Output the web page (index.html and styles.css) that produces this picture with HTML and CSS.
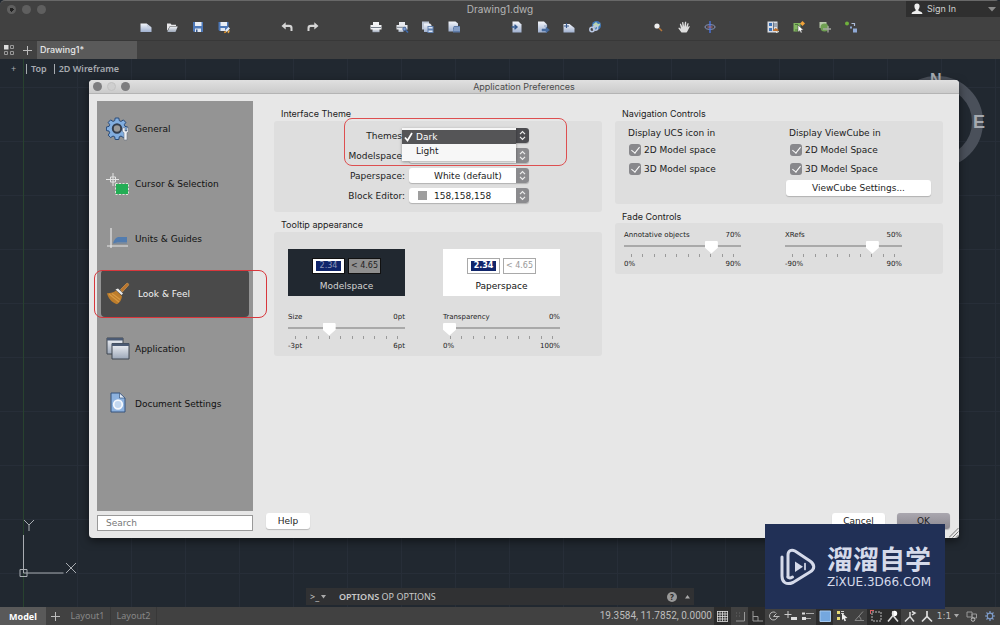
FILE: index.html
```
<!DOCTYPE html>
<html lang="en">
<head>
<meta charset="utf-8">
<title>Drawing1.dwg</title>
<link rel="stylesheet" href="styles.css">
</head>
<body>
<svg class="defs" aria-hidden="true">
  <defs>
    <linearGradient id="paper" x1="0" y1="0" x2="0" y2="1"><stop offset="0" stop-color="#f4f6fb"/><stop offset="1" stop-color="#9fb0cf"/></linearGradient>
    <linearGradient id="steel" x1="0" y1="0" x2="0" y2="1"><stop offset="0" stop-color="#f2f4f8"/><stop offset="1" stop-color="#9ca7b8"/></linearGradient>
    <symbol id="chev" viewBox="0 0 13 15"><path d="M4 6.2 6.5 3.6 9 6.2M4 8.8l2.5 2.6L9 8.8" fill="none" stroke="#eee" stroke-width="1.2"/></symbol>
  </defs>
</svg>
<div class="app">
  <header class="chrome">
    <div class="titlebar">
      <div class="lights"><i class="light dirty"></i><i class="light"></i><i class="light"></i></div>
      <h1 class="doc-title">Drawing1.dwg</h1>
      <button class="signin"><svg width="12" height="12" viewBox="0 0 12 12"><path d="M6 .5c1.800 0 2.700 1.200 2.600 2.800C8.500 5 7.800 6.200 7.400 6.500v1.300c1.500.5 3.800 1 4.100 3.200H.5C.8 8.800 3.100 8.300 4.600 7.800V6.500C4.200 6.200 3.500 5 3.400 3.300 3.300 1.700 4.200.5 6 .5z" fill="#eee"/></svg><span>Sign In</span><svg class="caret" width="8" height="5" viewBox="0 0 8 5"><path d="M0 0h8L4 4.500z" fill="#8a8a8a"/></svg></button>
    </div>
    <nav class="toolbar" aria-label="Tools">
      <div class="group">
        <button aria-label="New"><svg viewBox="0 0 14 14"><path d="M1.500 3.500h6l5 4v4.500h-11z" fill="url(#paper)"/><path d="M7.500 3.500l5 4H8.500z" fill="#c7cfdf"/></svg></button>
        <button aria-label="Open"><svg viewBox="0 0 14 14"><path d="M2 11V3.500h3.500l1 1.200H11V6H5z" fill="#e8e8ea"/><path d="M2.300 12 5 6.500h7.700L10.500 12z" fill="url(#steel)"/></svg></button>
        <button aria-label="Save"><svg viewBox="0 0 14 14"><path d="M2 2h10v10H3l-1-1z" fill="#4d78b8"/><path d="M4 2h6.500v4H4z" fill="#e9eef6"/><path d="M4 8.500h6V12H4z" fill="#dfe6f1"/><path d="M5 9.500h1.500V12H5z" fill="#38598c"/></svg></button>
        <button aria-label="Save as"><svg viewBox="0 0 14 14"><path d="M1.500 2h10v9h-9l-1-1z" fill="#4d78b8"/><path d="M3.500 2H10v4H3.500z" fill="#e9eef6"/><path d="M3.500 8H8v3H3.500z" fill="#dfe6f1"/><path d="M8 10.500 11.500 7l1.500 1.500-3.500 3.500z" fill="#e6eefb"/><path d="M8 10.500l1.500 2-2.500.8z" fill="#f09d2c"/><path d="M10.500 11l2-1v2l-1.500 1.500z" fill="#f2b04b"/></svg></button>
      </div>
      <div class="group">
        <button aria-label="Undo"><svg viewBox="0 0 14 14"><path d="M1.500 6 5.700 2.300v2.500H9c2.500 0 3.500 1.200 3.500 3V11h-2V8.500c0-1-.5-1.500-1.500-1.500H5.700v2.600z" fill="#d6d6d6"/></svg></button>
        <button aria-label="Redo"><svg viewBox="0 0 14 14"><path d="M12.500 6 8.300 2.300v2.500H5c-2.500 0-3.500 1.200-3.500 3V11h2V8.500C3.500 7.500 4 7 5 7h3.300v2.600z" fill="#d6d6d6"/></svg></button>
      </div>
      <div class="group">
        <button aria-label="Print"><svg viewBox="0 0 14 14"><path d="M4 2h6v3H4zM1.500 5h11v4.500h-11z" fill="#f1f2f4"/><path d="M2 7h10v1H2z" fill="#77808c"/><path d="M3.500 9h7v3.200h-7z" fill="url(#steel)"/></svg></button>
        <button aria-label="Print preview"><svg viewBox="0 0 14 14"><path d="M4 2h6v3H4zM1.500 5h11v4.500h-11z" fill="#e7e9ee"/><path d="M2 6.800h9v1H2z" fill="#77808c"/><path d="M3.500 9h5v3h-5z" fill="url(#steel)"/><circle cx="9.500" cy="9" r="1.700" fill="#7d9cd0" stroke="#3c5d96" stroke-width=".8"/><path d="m11 10.500 2 2" stroke="#3c6bb0" stroke-width="1.600"/></svg></button>
        <button aria-label="Batch print"><svg viewBox="0 0 14 14"><path d="M1 1.500h7v8H1z" fill="#bdc6d6"/><path d="M3 3.500h6l1.500 1.500v7H3z" fill="url(#paper)"/><path d="M6.500 6h6v7h-6z" fill="#5f7fae"/><path d="M7.500 7h4v1.500h-4zM7.500 10.500h4V12h-4z" fill="#dbe5f5"/></svg></button>
        <button aria-label="Page setup"><svg viewBox="0 0 14 14"><path d="M1.500 1.500h7l2.500 2v8h-9.500z" fill="url(#paper)"/><path d="M7 6h6v6.500H6V8z" fill="#5e7ba8"/><path d="M7 8h6M6.500 10H13" stroke="#a9bfe0"/></svg></button>
      </div>
      <div class="group">
        <button aria-label="Import"><svg viewBox="0 0 14 14"><path d="M2.500 1.500h6l3 3v8h-9z" fill="url(#paper)"/><path d="M1.500 7h5M4.500 4.800 7 7 4.500 9.200" fill="none" stroke="#33598f" stroke-width="1.400"/></svg></button>
        <button aria-label="Export"><svg viewBox="0 0 14 14"><path d="M2 1.500h6l3 3v8H2z" fill="url(#paper)"/><path d="M6 9h4V7l3.500 3-3.500 2.700V11H6zM8 6h4" fill="#466b9f" stroke="#466b9f" stroke-width=".5"/></svg></button>
        <button aria-label="Publish"><svg viewBox="0 0 14 14"><path d="M1.500 4h6l5 4v4.500h-11z" fill="url(#paper)"/><path d="M2 6h5M4.500 3v5" stroke="#38598c" stroke-width="1.200"/></svg></button>
        <button aria-label="Web link"><svg viewBox="0 0 14 14"><circle cx="8.500" cy="5.500" r="4.500" fill="#3f78bd"/><path d="M5 4.500 8 2l2 2 2.500-.5-1.500 3-3 .5-1 2z" fill="#b8d4b0"/><g fill="none" stroke="#b9c7e2" stroke-width="1.500"><circle cx="4" cy="9.500" r="2.200"/><circle cx="7.500" cy="8" r="2.200"/></g></svg></button>
      </div>
      <div class="group">
        <button aria-label="Zoom"><svg viewBox="0 0 14 14"><circle cx="6" cy="6" r="2.600" fill="#eee"/><path d="m8 8 3 3" stroke="#b5763a" stroke-width="1.500"/></svg></button>
        <button aria-label="Pan"><svg viewBox="0 0 14 14"><path d="M4.500 12.500 1.300 8.300 2 7.500l2 1.300L2.800 4l1-.4L5.500 7 5 2.300 6.200 2l1 4.700L8 1.700l1.200.1-.1 5.100 1.600-3.800 1 .4-1 4 1.300-1.500.9.500-2.600 5-.8 1z" fill="#dfdfdf"/></svg></button>
        <button aria-label="Orbit"><svg viewBox="0 0 14 14"><ellipse cx="7" cy="7" rx="5" ry="2.300" fill="none" stroke="#8795bd"/><path d="M7 1v12" stroke="#4a77ec" stroke-width="1.300"/><path d="M4.500 7h5" stroke="#b76b7f"/></svg></button>
      </div>
      <div class="group">
        <button aria-label="Tool sets"><svg viewBox="0 0 14 14"><path d="M1.500 1.500h10v11h-10z" fill="#d9dde5"/><path d="M3 3h3v3H3zM3 8h3v3H3z" fill="#3d73b8"/><path d="M7.500 2.500v8M8 4h3M8 6h3" stroke="#657287"/><path d="m6.500 11 3-3 3.500 2-1.500 1z" fill="#c0702b"/><path d="m10 12.500 3-1" stroke="#eed"/></svg></button>
        <button aria-label="Quick select"><svg viewBox="0 0 14 14"><path d="M1.500 3h7v8.500h-7z" fill="#83b661"/><path d="M3 4.500h3M3 10h3" stroke="#4c793a"/><path d="m10.500 1 2.500 2.500-2.500 2.500L8 3.500z" fill="#f1a23a"/><path d="M6 5l5.500 5-2.300.2 1 2.300-1.400.5-1-2.300L6 12z" fill="#fff" stroke="#333" stroke-width=".5"/></svg></button>
        <button aria-label="Block"><svg viewBox="0 0 14 14"><path d="M1.500 2h7v6h-7z" fill="#b9c9ab"/><circle cx="6.500" cy="7.500" r="4" fill="#6fa052"/><path d="M5 9h8M10 6v6.500" stroke="#a5a8a1" stroke-width="1.300"/></svg></button>
        <button aria-label="References"><svg viewBox="0 0 14 14"><circle cx="3" cy="3.500" r="2" fill="#6fb13c"/><path d="M7.500 3.500h3V6" fill="none" stroke="#aebdda" stroke-width="1.200"/><path d="M6 6.500h2v2H6zM9 8.500h4v4H9z" fill="#8fa9d6"/></svg></button>
      </div>
    </nav>
    <div class="tabs">
      <button class="grid-btn" aria-label="All drawings"><svg width="10" height="10" viewBox="0 0 10 10"><path d="M0 0h4.500v4.500H0z" fill="#ddd"/><path d="M6.500.5h3v3h-3zM.5 6.500h3v3h-3zM6.500 6.500h3v3h-3z" fill="none" stroke="#999"/></svg></button>
      <button class="add" aria-label="New tab"><svg width="9" height="9" viewBox="0 0 9 9"><path d="M4.500 0v9M0 4.500h9" stroke="#bbb"/></svg></button>
      <button class="tab">Drawing1*</button>
    </div>
  </header>

  <main class="canvas">
    <div class="view-label"><span class="plus">+</span><span class="vl">Top</span><span class="vl">2D Wireframe</span></div>
    <div class="compass"><span class="north">N</span><span class="east">E</span></div>
    <svg class="ucs" width="62" height="60" viewBox="0 0 62 60" fill="none" stroke="#a9adb2"><path d="M4.500 17v38h40M1 51.500h7v7H1zM5 2l5 5 5-5M10 7v6"/><path d="m47 45 10 10M57 45 47 55"/></svg>

    <section class="dialog" role="dialog" aria-labelledby="dlg-title">
      <div class="dlg-bar"><div class="lights"><i class="light"></i><i class="light off"></i><i class="light"></i></div><h2 id="dlg-title">Application Preferences</h2><span></span></div>
      <div class="dlg-body">
        <aside class="side">
          <nav class="side-list" aria-label="Preference pages">
            <button class="side-item"><svg viewBox="0 0 24 24"><path d="M9.200 1h3.600l.5 2.700 1.700.7 2.400-1.500 2.400 2.500-1.500 2.300.7 1.700 2.700.6v3.500l-2.700.6-.7 1.700 1.500 2.300-2.400 2.500-2.400-1.600-1.700.8-.5 2.700H9.200l-.5-2.700-1.700-.8-2.400 1.600-2.400-2.500 1.500-2.300-.7-1.700L.4 13.500V10l2.600-.6.7-1.700-1.500-2.300 2.400-2.500L7 4.400l1.700-.7z" fill="#82aee0" stroke="#294a78" stroke-width="1"/><circle cx="11" cy="11.500" r="4.200" fill="#9a9a9a" stroke="#333d4e" stroke-width="2"/><path d="M16.500 11v3.500l1.500 1.200V23h3v-7.300l1.500-1.200V11l-1.500-.5V14h-2v-3.500z" fill="#eef1f6" stroke="#66707f" stroke-width=".6"/></svg><span>General</span></button>
            <button class="side-item"><svg viewBox="0 0 24 24"><path d="M7 1v13M0 7.500h13M4.500 5h5v5h-5z" fill="none" stroke="#e4e4e4"/><path d="M10 12h12v10H10z" fill="#23ad55"/><path d="M9.500 11.500h13v11h-13z" fill="none" stroke="#d8ead8" stroke-dasharray="2 1.500"/></svg><span>Cursor &amp; Selection</span></button>
            <button class="side-item"><svg viewBox="0 0 24 24"><path d="M5 1v20M1 19h21" stroke="#e6e6e6" stroke-width="1.200"/><path d="M7 16.500c2-6.500 5-6.500 7-6.500h7v5.500h-9c-3 0-3 1-5 1z" fill="#527caf"/><path d="M7 16.500h14" stroke="#789" stroke-width=".8"/></svg><span>Units &amp; Guides</span></button>
            <button class="side-item active"><svg viewBox="0 0 24 24"><path d="m14.500 7.500 6-6c1.500-.7 2.700.5 1.800 2l-6 6.500z" fill="#b9752e" stroke="#dca052" stroke-width=".6"/><path d="m12 6.500 5 5-1.500 1.500-6-5.500z" fill="#ececec"/><path d="M10 8.500c-2 2-5 2.500-9 2.700 1 5 5 9.500 10 11 3-1.700 4.500-4.500 5-8z" fill="#bd7d2c"/><path d="m3 12 10 8M6 11.500l8 6" stroke="#d99a42" stroke-width="1.200"/></svg><span>Look &amp; Feel</span></button>
            <button class="side-item"><svg viewBox="0 0 24 24"><path d="M1 1h16v16H1z" fill="url(#steel)" stroke="#3f4650"/><path d="M1 1h16v2.500H1z" fill="#4b5a73"/><path d="M6 6.500h17V22H6z" fill="url(#steel)" stroke="#3f4650"/><path d="M6 6.500h17V9H6z" fill="#4b5a73"/></svg><span>Application</span></button>
            <button class="side-item"><svg viewBox="0 0 24 24"><path d="M5 1h8.500L19 6v14H5z" fill="#8db2df" stroke="#35537c"/><path d="M13.500 1v5H19z" fill="#e6eef9" stroke="#35537c" stroke-width=".7"/><circle cx="12" cy="12.500" r="4.300" fill="#c2d7f0" stroke="#f5f8fd" stroke-width="1.700"/></svg><span>Document Settings</span></button>
          </nav>
          <input class="search" type="search" placeholder="Search" aria-label="Search">
        </aside>
        <div class="content">
          <div class="panels">
            <div class="col">
              <h3>Interface Theme</h3>
              <div class="panel theme-panel">
                <div class="row">
                  <label for="themes">Themes:</label>
                  <div class="pick open"><select id="themes"><option>Dark</option><option>Light</option></select><svg><use href="#chev"/></svg>
                    <ul class="menu"><li class="on"><svg width="9" height="10" viewBox="0 0 9 10"><path d="M1 5.500 3.500 8.500 8 1" fill="none" stroke="#fff" stroke-width="1.700"/></svg>Dark</li><li>Light</li></ul>
                  </div>
                </div>
                <div class="row"><label for="model">Modelspace:</label><div class="pick"><select id="model"><option>Black (default)</option></select><svg><use href="#chev"/></svg></div></div>
                <div class="row"><label for="papersp">Paperspace:</label><div class="pick"><select id="papersp"><option>White (default)</option></select><svg><use href="#chev"/></svg></div></div>
                <div class="row"><label for="block">Block Editor:</label><div class="pick"><select id="block"><option>158,158,158</option></select><i class="swatch"></i><svg><use href="#chev"/></svg></div></div>
                <div class="mark mark-theme"></div>
              </div>
              <h3 class="later">Tooltip appearance</h3>
              <div class="panel tip-panel">
                <div class="preview dark"><div class="boxes"><span class="val"><b>2.34</b></span><span class="ang">&lt; 4.65</span></div><p>Modelspace</p></div>
                <div class="preview light-bg"><div class="boxes"><span class="val"><b>2.34</b></span><span class="ang">&lt; 4.65</span></div><p>Paperspace</p></div>
                <div class="slider"><div class="ends"><label for="size">Size</label><output>0pt</output></div><input id="size" type="range" min="-3" max="6" value="0"><div class="ticks"><i></i><i></i><i></i><i></i><i></i><i></i><i></i><i></i><i></i><i></i></div><div class="ends"><span>-3pt</span><span>6pt</span></div></div>
                <div class="slider"><div class="ends"><label for="transp">Transparency</label><output>0%</output></div><input id="transp" type="range" min="0" max="100" value="0"><div class="ticks"><i></i><i></i><i></i><i></i><i></i><i></i><i></i><i></i><i></i><i></i></div><div class="ends"><span>0%</span><span>100%</span></div></div>
              </div>
            </div>
            <div class="col">
              <h3>Navigation Controls</h3>
              <div class="panel nav-panel">
                <div class="checks"><h4>Display UCS icon in</h4><label><input type="checkbox" checked>2D Model space</label><label><input type="checkbox" checked>3D Model space</label></div>
                <div class="checks"><h4>Display ViewCube in</h4><label><input type="checkbox" checked>2D Model Space</label><label><input type="checkbox" checked>3D Model Space</label><button class="btn">ViewCube Settings...</button></div>
              </div>
              <h3 class="later">Fade Controls</h3>
              <div class="panel fade-panel">
                <div class="slider"><div class="ends"><label for="anno">Annotative objects</label><output>70%</output></div><input id="anno" type="range" min="0" max="90" value="70"><div class="ticks"><i></i><i></i><i></i><i></i><i></i><i></i><i></i><i></i><i></i><i></i></div><div class="ends"><span>0%</span><span>90%</span></div></div>
                <div class="slider"><div class="ends"><label for="xref">XRefs</label><output>50%</output></div><input id="xref" type="range" min="-90" max="90" value="50"><div class="ticks"><i></i><i></i><i></i><i></i><i></i><i></i><i></i><i></i><i></i><i></i></div><div class="ends"><span>-90%</span><span>90%</span></div></div>
              </div>
            </div>
          </div>
          <footer class="dlg-foot"><button class="btn help">Help</button><button class="btn cancel">Cancel</button><button class="btn ok">OK</button></footer>
        </div>
      </div>
      <svg class="grip" width="10" height="10" viewBox="0 0 10 10"><path d="M0 9.500 9.500 0M3.500 9.500l6-6M7 9.500 9.500 7" stroke="#777" fill="none"/></svg>
    </section>

    <div class="cmd"><span class="prompt">&gt;_<svg width="5" height="4" viewBox="0 0 5 4"><path d="M0 0h5L2.500 3.500z" fill="#aaa"/></svg></span><span class="cmd-text"><b>OPTIONS</b> OP OPTIONS</span><button class="q">?</button><svg width="5" height="4" viewBox="0 0 5 4"><path d="M0 3.500h5L2.500 0z" fill="#aaa"/></svg></div>
  </main>

  <footer class="status">
    <button class="model">Model</button>
    <button class="add" aria-label="Add layout"><svg width="9" height="9" viewBox="0 0 9 9"><path d="M4.500 0v9M0 4.500h9" stroke="#bbb"/></svg></button>
    <button class="layout">Layout1</button>
    <button class="layout">Layout2</button>
    <span class="coords">19.3584, 11.7852, 0.0000</span>
    <div class="toggles">
      <button class="down" aria-label="Grid"><svg viewBox="0 0 14 14"><path d="M1.500 2v10.500M4 2v10.500M6.500 2v10.500M9 2v10.500M11.500 2v10.500M1 2.500h11M1 5h11M1 7.500h11M1 10h11M1 12.500h11" stroke="#ddd" stroke-width=".8"/></svg></button>
      <button aria-label="Snap"><svg viewBox="0 0 14 14"><path d="M11.500 3v9H3" fill="none" stroke="#999"/><path d="M3 4h6M3 7h6" stroke="#666" stroke-dasharray="1 2"/></svg></button>
      <button class="down" aria-label="Ortho"><svg viewBox="0 0 14 14"><path d="M3 2v10h10M3 7.500h5V12" fill="none" stroke="#999"/></svg></button>
      <button aria-label="Polar"><svg viewBox="0 0 14 14"><path d="M10.500 7.500A4 4 0 1 1 8.500 3.500M6.500 7.500h6M6.500 7.500l3-3" fill="none" stroke="#bbb"/></svg></button>
      <button aria-label="Object snap"><svg viewBox="0 0 14 14"><path d="M4 2v7M.5 5.500h7" stroke="#ccc"/><path d="M7 8h6v3H7z" fill="#ddd"/></svg></button>
      <button aria-label="Lineweight"><svg viewBox="0 0 14 14"><path d="M5 4.500h8M5 9.500h5" stroke="#aaa"/><path d="M1 3.500h3v2H1zM1 8h4v3H1z" fill="#ddd"/></svg></button>
      <button class="down" aria-label="Transparency"><svg viewBox="0 0 14 14"><path d="M2 2h10.500v10.500H2z" fill="#74a7df" stroke="#a6caf0"/></svg></button>
      <button aria-label="Quick properties"><svg viewBox="0 0 14 14"><path d="M2 2h3v3H2zM2 8h3v3H2z" fill="#e9dd77"/><path d="M6 2.500h3M6 4.500h3" stroke="#ccc"/><path d="M7 4l5.500 5-2.500.2 1 2.500-1.500.6-1-2.500L7 11z" fill="#eee"/></svg></button>
      <button aria-label="Angle"><svg viewBox="0 0 14 14"><path d="M11 2.500 3 11.500h9M7 7.500c1.500.8 2 2 2 4" fill="none" stroke="#888"/></svg></button>
      <button class="down" aria-label="Dynamic UCS"><svg viewBox="0 0 14 14"><path d="M3 3h9v9H3z" fill="none" stroke="#bbb" stroke-dasharray="2 1"/><path d="M1 1.500h4M1.500 1v4" stroke="#d75c61"/></svg></button>
      <button class="down" aria-label="Annotation visibility"><svg viewBox="0 0 14 14"><circle cx="8.500" cy="4.500" r="2.700" fill="#fff"/><path d="m2 12.500 5-6 5 6M7 7V2" fill="none" stroke="#ddd" stroke-width="1.600"/></svg></button>
      <button aria-label="Annotation auto scale"><svg viewBox="0 0 14 14"><path d="m2 12.500 5-5 4 5M7 8V3M9 6l3-2-3-1.500" fill="none" stroke="#ddd" stroke-width="1.500"/></svg></button>
      <button aria-label="Annotation scale"><svg viewBox="0 0 14 14"><path d="m2 12.500 5-5 5 5M7 8V2" fill="none" stroke="#ddd" stroke-width="1.700"/></svg></button>
      <button class="scale">1:1<svg width="5" height="4" viewBox="0 0 5 4"><path d="M0 0h5L2.500 3.500z" fill="#aaa"/></svg></button>
      <button aria-label="Isolate"><svg viewBox="0 0 14 14"><path d="M2 3h5v5H2zM7 5h4.500v4H7z" fill="none" stroke="#999"/><circle cx="8" cy="10.500" r="1.800" fill="none" stroke="#bbb"/></svg></button>
      <button aria-label="Settings"><svg viewBox="0 0 14 14"><circle cx="7" cy="7" r="2.800" fill="none" stroke="#7f9dcb" stroke-width="1.200"/><path d="M7 2v2M7 10v2M2 7h2M10 7h2M3.500 3.500l1.300 1.300M9.200 9.200l1.300 1.300M3.500 10.500l1.300-1.300M9.200 4.800l1.300-1.300" stroke="#7f9dcb" stroke-width="1.200"/></svg></button>
    </div>
  </footer>

  <div class="brand">
    <svg width="36" height="38" viewBox="0 0 36 38" fill="none" stroke="#d5daea" stroke-linecap="round" stroke-linejoin="round"><path d="M8 29V7c0-4 3-6 7-4l15 10c5 3.500 5 8 0 11L13 34.500C6 37.500 2 34 2 28V9" stroke-width="3"/><path d="M8 29c1 1.500 3 1 4.500 0" stroke-width="3"/><path d="M15 13.500v10.500l8-5.300z" fill="#d5daea" stroke="none"/><path d="M25 15.500v6" stroke-width="1.700"/></svg>
    <div class="brand-text"><strong lang="zh">溜溜自学</strong><span>ZiXUE.3D66.COM</span></div>
  </div>
</div>
</body>
</html>
```
FILE: styles.css
```
* { box-sizing: border-box; }
html, body { height: 100%; }
body { margin: 0; background: #212830; color: #1c1c1c; font: 9px/12px "DejaVu Sans", sans-serif; overflow: hidden; }
h1, h2, h3, h4, p, ul { margin: 0; padding: 0; font-weight: 400; font-size: inherit; }
button { border: 0; padding: 0; background: none; color: inherit; font: inherit; display: flex; align-items: center; justify-content: center; }
.defs { position: absolute; width: 0; height: 0; }
.app { position: relative; min-height: 100vh; display: flex; flex-direction: column; }

.chrome { background: #414141; border-top: 1px solid #686868; border-radius: 5px 5px 0 0; color: #b6b6b6; font-family: Inter, sans-serif; }
.titlebar { display: grid; grid-template-columns: 1fr auto 1fr; align-items: center; height: 16px; }
.lights { display: flex; gap: 6px; padding-left: 7px; }
.light { width: 9px; height: 9px; border-radius: 50%; background: #5f5f5f; }
.dirty { background: radial-gradient(circle, #222 0 2px, #5f5f5f 2px); }
.doc-title { font-size: 10px; }
.signin { justify-self: end; width: 94px; height: 16px; padding: 0 4px 0 5px; gap: 4px; background: #2f2f2f; color: #cfcfcf; }
.caret { margin-left: auto; }
.toolbar { display: flex; justify-content: center; align-items: flex-start; gap: 37px; height: 24px; padding-right: 4px; border-bottom: 1px solid #383838; }
.group { display: flex; align-items: center; }
.group button { width: 26px; height: 20px; }
.group svg { width: 14px; height: 14px; }
.tabs { display: flex; align-items: stretch; height: 18px; }
.grid-btn { width: 18px; }
.add { width: 19px; }
.tab { width: 100px; padding-left: 3px; justify-content: flex-start; background: #5a5a5a; color: #e6e6e6; font-weight: 500; }

.canvas { position: relative; flex: 1; background-color: #212830;
  background-image: linear-gradient(90deg, #28422f 1px, transparent 1px), linear-gradient(90deg, #272e38 1px, transparent 1px), linear-gradient(#272e38 1px, transparent 1px);
  background-size: 100% 100%, 54px 100%, 100% 54px; background-position: 23px 0, 23px 0, 0 28px; background-repeat: no-repeat, repeat, repeat; }
.view-label { display: flex; align-items: center; height: 20px; padding-left: 11px; color: #a7abb0; font-family: "Noto Sans", sans-serif; font-weight: 600; }
.plus { width: 15px; font-weight: 400; }
.vl { border-left: 1px solid #a7abb0; padding: 0 6px 0 4px; line-height: 10px; margin-right: 1px; }
.compass { position: absolute; top: 17px; right: 17px; width: 92px; height: 92px; border: 11px solid #4a505a; border-radius: 50%; color: #a5a9af; font: 700 16px/16px "Liberation Sans", sans-serif; }
.north { position: absolute; top: -15px; left: 28px; }
.east { position: absolute; top: 27px; right: -13px; font-size: 18px; }
.ucs { position: absolute; left: 19px; bottom: 29px; }

.dialog { position: absolute; inset: 21px 41px 69px 89px; display: flex; flex-direction: column; background: #e7e7e7; border-radius: 4px; box-shadow: 0 3px 9px rgba(0,0,0,.5); }
.dlg-bar { display: grid; grid-template-columns: 1fr auto 1fr; align-items: center; height: 14px; background: linear-gradient(#e0e0e0, #cbcbcb); border-bottom: 1px solid #b4b4b4; border-radius: 4px 4px 0 0; color: #4a4a4a; font-family: Inter, sans-serif; font-size: 9px; }
.dlg-bar .lights { gap: 5px; padding-left: 4px; }
.dlg-bar .light { background: #7d7d7f; }
.dlg-bar .off { background: #cfcfcf; border: 1px solid #c2c2c2; }
.dlg-body { flex: 1; display: flex; padding: 7px 0 7px 8px; }
.side { width: 156px; display: flex; flex-direction: column; gap: 4px; }
.side-list { flex: 1; display: flex; flex-direction: column; gap: 8px; padding: 4px; background: #949494; }
.side-item { position: relative; height: 47px; justify-content: flex-start; gap: 5px; padding-left: 5px; color: #111; }
.side-item svg { width: 24px; height: 24px; }
.active { background: #4a4a4a; border-radius: 4px; color: #f2f2f2; gap: 8px; }
.active::after { content: ""; position: absolute; inset: 0 -18px -1px -7px; border: 1px solid #d8373c; border-radius: 8px; z-index: 1; }
.search { height: 16px; width: 100%; border: 1px solid #999; background: #fff; padding: 0 8px; font: inherit; appearance: none; }
.search::placeholder { color: #777; }

.content { flex: 1; display: flex; flex-direction: column; justify-content: space-between; }
.panels { display: grid; grid-template-columns: 1fr 1fr; gap: 13px; padding: 7px 16px 0 21px; }
h3 { padding-left: 7px; line-height: 12px; font-family: Inter, sans-serif; font-size: 9px; }
.later { padding-top: 7px; }
.panel { background: #dedede; border-radius: 3px; margin-top: 1px; position: relative; }
.theme-panel { display: grid; gap: 5px; padding: 7px 0 9px; }
.row { display: grid; grid-template-columns: 131px 120px; gap: 4px; align-items: center; text-align: right; }
.pick { position: relative; height: 15px; text-align: left; }
.pick select { width: 100%; height: 15px; border: 0; border-radius: 3px; background: #fff; padding: 0 15px 0 25px; font: inherit; color: inherit; appearance: none; box-shadow: 0 1px 1px rgba(0,0,0,.2); }
.pick > svg { position: absolute; top: 0; right: 0; width: 13px; height: 15px; background: #8b8b8e; border-radius: 0 3px 3px 0; }
.open > svg { background: #4c4c50; }
.swatch { position: absolute; left: 9px; top: 3px; width: 9px; height: 9px; background: #9e9e9e; }
.menu { position: absolute; top: 0; left: -7px; right: 13px; z-index: 2; padding: 2px 0 3px; list-style: none; background: #f7f7f7; box-shadow: 0 1px 3px rgba(0,0,0,.35); }
.menu li { position: relative; height: 14px; line-height: 14px; padding-left: 14px; }
.menu .on { background: #555557; color: #fff; }
.menu svg { position: absolute; left: 2px; top: 2px; }
.mark { position: absolute; z-index: 3; border: 1px solid #dd4f50; border-radius: 8px; pointer-events: none; }
.mark-theme { top: -3px; left: 70px; right: 35px; height: 48px; }

.tip-panel { display: grid; grid-template-columns: 117px 117px; column-gap: 38px; row-gap: 16px; padding: 17px 14px 5px; }
.preview { height: 47px; padding-top: 9px; text-align: center; }
.preview p { padding-top: 6px; }
.dark { background: #212830; color: #d3d3d3; }
.light-bg { background: #fff; color: #111; }
.boxes { display: flex; justify-content: center; gap: 3px; font-size: 8px; line-height: 10px; }
.val, .ang { width: 33px; height: 16px; padding: 2px 0; border: 1px solid #111; white-space: nowrap; line-height: 10px; }
.val { background: #fff; }
.val b { display: block; margin: 0 3px; background: #10256b; color: #fff; font-size: 8px; }
.dark .val b { color: #8e97b9; font-weight: 400; }
.dark .ang { background: #8f8f8f; color: #222; }
.light-bg .val, .light-bg .ang { border-color: #a9a9a9; }
.light-bg .ang { color: #999; }

.slider { font-size: 7px; line-height: 10px; }
.ends { display: flex; justify-content: space-between; }
.slider input { display: block; width: 100%; height: 14px; margin: 0; appearance: none; background: linear-gradient(#a9a9a9, #a9a9a9) 0 5px / 100% 2px no-repeat; }
.slider input::-webkit-slider-thumb { appearance: none; width: 13px; height: 13px; background: #fff; clip-path: polygon(10% 0, 90% 0, 100% 10%, 100% 55%, 50% 100%, 0 55%, 0 10%); }
.ticks { display: flex; justify-content: space-between; padding: 0 7px; height: 5px; }
.ticks i { width: 1px; height: 3px; background: #9a9a9a; }

.nav-panel { display: grid; grid-template-columns: 161px 1fr; padding: 6px 12px 8px 10px; }
.checks { display: flex; flex-direction: column; }
.checks h4 { padding: 0 3px 3px; }
.checks label { display: flex; align-items: center; gap: 3px; height: 15px; margin-bottom: 4px; padding-left: 4px; }
.checks input { appearance: none; width: 12px; height: 12px; margin: 0; border-radius: 3px; background: #88888c; display: grid; place-items: center; }
.checks input:checked::after { content: ""; width: 4px; height: 7px; border: solid #fff; border-width: 0 1px 1px 0; rotate: 38deg; margin-bottom: 2px; }
.btn { height: 16px; border-radius: 3px; background: #fff; box-shadow: 0 1px 1px rgba(0,0,0,.2); }
.fade-panel { display: grid; grid-template-columns: 117px 117px; gap: 44px; padding: 7px 9px 5px; margin-top: 0; }

.dlg-foot { display: flex; gap: 12px; padding: 0 9px 2px 13px; }
.help { width: 44px; margin-right: auto; }
.cancel, .ok { width: 53px; }
.ok { background: linear-gradient(#aaa7af, #8b8890); }
.grip { position: absolute; right: 0; bottom: 0; }

.cmd { position: absolute; left: 306px; right: 306px; bottom: 2px; height: 17px; display: flex; align-items: center; gap: 8px; padding: 0 4px; background: #303133; color: #c9c9c9; font: 9px/12px "Noto Sans", sans-serif; }
.prompt { display: flex; align-items: center; gap: 2px; width: 21px; }
.cmd-text { flex: 1; }
.cmd-text b { font-weight: 600; }
.q { width: 10px; height: 10px; border-radius: 50%; background: #999; color: #222; font-weight: 700; font-size: 8px; }

.status { display: flex; align-items: stretch; height: 18px; background: #414141; color: #bdbdbd; }
.model { width: 46px; background: #595959; color: #fff; font: 700 9px "Noto Sans", sans-serif; }
.layout { width: 46px; border-right: 1px solid #383838; color: #888; font-family: "Noto Sans", sans-serif; }
.coords { margin-left: auto; align-self: center; padding-right: 2px; font-family: Roboto, sans-serif; font-size: 10px; }
.toggles { display: flex; }
.toggles button { width: 17px; }
.toggles .down { background: #2c2c2c; }
.toggles svg { width: 14px; height: 14px; }
.toggles .scale { width: 26px; gap: 3px; margin-right: 2px; }
.toggles .scale svg { width: 5px; height: 4px; }
.toggles button:last-child { margin: 0 2px 0 1px; }

.brand { position: absolute; right: 55px; bottom: 16px; width: 180px; height: 85px; display: flex; align-items: center; gap: 11px; padding-left: 15px; background: #213056; color: #d5daea; z-index: 4; }
.brand-text { display: grid; gap: 5px; }
.brand strong { font: 700 26px/26px "Noto Sans CJK SC", sans-serif; }
.brand-text span { font-size: 12px; line-height: 12px; }
```
